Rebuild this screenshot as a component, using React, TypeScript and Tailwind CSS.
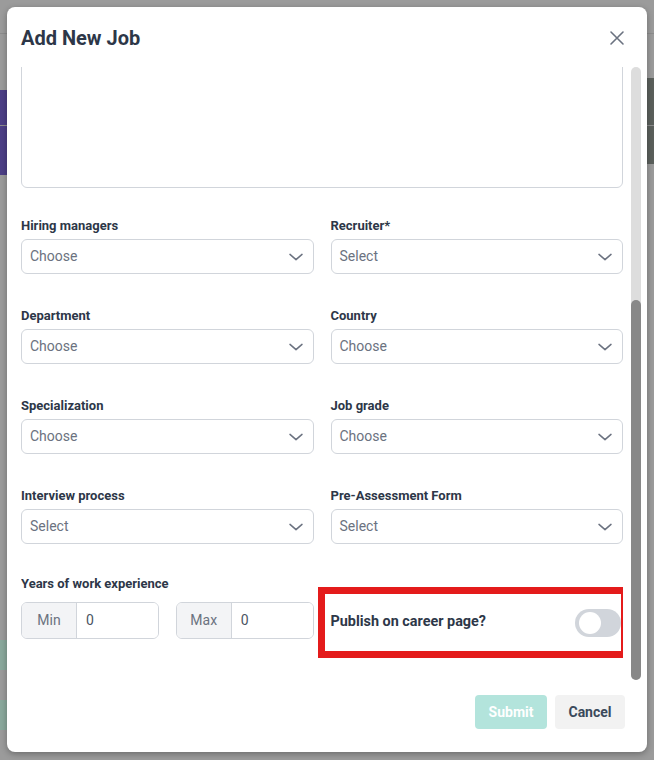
import { useEffect, useRef } from 'react'

const ROWS = [
  [
    { label: 'Hiring managers', placeholder: 'Choose' },
    { label: 'Recruiter*', placeholder: 'Select' },
  ],
  [
    { label: 'Department', placeholder: 'Choose' },
    { label: 'Country', placeholder: 'Choose' },
  ],
  [
    { label: 'Specialization', placeholder: 'Choose' },
    { label: 'Job grade', placeholder: 'Choose' },
  ],
  [
    { label: 'Interview process', placeholder: 'Select' },
    { label: 'Pre-Assessment Form', placeholder: 'Select' },
  ],
]

function Chevron() {
  return (
    <svg width="18" height="18" viewBox="0 0 24 24" fill="none" stroke="#6b7280" strokeWidth="2" strokeLinecap="round" strokeLinejoin="round">
      <path d="M4 8.5l8 7 8-7" />
    </svg>
  )
}

function SelectBox({ label, placeholder }: { label: string; placeholder: string }) {
  return (
    <div className="flex flex-col">
      <div className="text-[13px] leading-4 font-bold text-[#2d3748] mb-[5px]">{label}</div>
      <div className="h-[35px] rounded-[6px] border border-[#d1d5db] bg-white flex items-center justify-between pl-[8px] pr-[8px]">
        <span className="text-[14px] text-[#6b7280]">{placeholder}</span>
        <Chevron />
      </div>
    </div>
  )
}

function RangeInput({ addon }: { addon: string }) {
  return (
    <div className="flex h-[37px] rounded-[6px] border border-[#d1d5db] overflow-hidden">
      <div className="w-[55px] bg-[#f3f4f6] border-r border-[#d1d5db] flex items-center justify-center text-[14px] text-[#6b7280]">{addon}</div>
      <div className="flex-1 bg-white flex items-center pl-[9px] text-[14px] text-[#4b5563]">0</div>
    </div>
  )
}

export default function App() {
  const scrollRef = useRef<HTMLDivElement>(null)

  useEffect(() => {
    const el = scrollRef.current
    if (el) el.scrollTop = el.scrollHeight
  }, [])

  return (
    <div className="relative w-[654px] h-[760px] overflow-hidden bg-[#9b9b9b]" style={{ fontFamily: 'Roboto, "Liberation Sans", sans-serif' }}>
      {/* faded app behind the overlay */}
      <div className="absolute left-0 top-[33px] w-full h-px bg-[#8c8c8c]" />
      <div className="absolute left-0 top-[90px] w-[10px] h-[85px] bg-[#4c3f86]" />
      <div className="absolute right-0 top-[78px] w-[10px] h-[86px] bg-[#5b605c]" />
      <div className="absolute left-0 top-[125px] w-full h-px bg-[#8c8c8c]" />
      <div className="absolute left-0 top-[640px] w-[10px] h-[30px] bg-[#8aa89c]" />
      <div className="absolute left-0 top-[700px] w-[10px] h-[30px] bg-[#8aa89c]" />

      {/* modal */}
      <div className="absolute left-[7px] top-[7px] w-[640px] h-[745px] bg-white rounded-[8px] shadow-[0_2px_6px_rgba(0,0,0,0.3)] flex flex-col">
        <div className="flex items-center justify-between pl-[14px] pr-[22px] pt-[16px] h-[60px]">
          <h2 className="text-[20px] font-bold text-[#2d3748] leading-none -mt-[14px]">Add New Job</h2>
          <svg className="-mt-[14px]" width="16" height="16" viewBox="0 0 16 16" fill="none" stroke="#6b7280" strokeWidth="1.6" strokeLinecap="round">
            <path d="M2 2l12 12M14 2L2 14" />
          </svg>
        </div>

        <div className="flex ml-[14px] mr-[6px] h-[613px] gap-[8px]">
          <div
            ref={scrollRef}
            className="w-[602px] h-full overflow-y-scroll [scrollbar-width:none] [&::-webkit-scrollbar]:hidden"
          >
            {/* job title + description, mostly scrolled out of view */}
            <div className="flex flex-col pt-[21px]">
              <div className="h-[35px] rounded-[6px] border border-[#d1d5db]" />
              <div className="h-[310px] mt-[52px] rounded-[6px] border border-[#d1d5db]" />
            </div>

            <div className="grid grid-cols-2 gap-x-[17px] gap-y-[34px] mt-[30px]">
              {ROWS.flat().map(f => (
                <SelectBox key={f.label} label={f.label} placeholder={f.placeholder} />
              ))}
            </div>

            <div className="grid grid-cols-2 gap-x-[17px] mt-[32px] pb-[41px]">
              <div className="flex flex-col">
                <div className="text-[13px] leading-4 font-bold text-[#2d3748] mb-[10px]">Years of work experience</div>
                <div className="grid grid-cols-2 gap-x-[17px]">
                  <RangeInput addon="Min" />
                  <RangeInput addon="Max" />
                </div>
              </div>
              <div className="relative flex items-start justify-between pt-[35px] pr-[2px]">
                <span className="text-[14.4px] font-bold text-[#2d3748]">Publish on career page?</span>
                <div className="mt-[-2px] w-[46px] h-[28px] rounded-full bg-[#d1d5db] flex items-center pl-[4px]">
                  <div className="w-[22px] h-[22px] rounded-full bg-white" />
                </div>
                {/* annotation box */}
                <div className="absolute left-[-13px] right-[-5px] top-[11px] h-[71px] border-[7px] border-[#e41b1b] pointer-events-none" />
              </div>
            </div>
          </div>

          {/* scrollbar */}
          <div className="w-[10px] h-full rounded-full bg-[#dddddd] flex flex-col justify-end">
            <div className="h-[380px] rounded-full bg-[#888888]" />
          </div>
        </div>

        <div className="flex justify-end gap-[8px] pr-[22px] pt-[15px]">
          <button className="h-[34px] w-[72px] rounded-[4px] bg-[#b3e4dc] text-white text-[14px] font-bold">Submit</button>
          <button className="h-[34px] w-[70px] rounded-[4px] bg-[#f2f2f2] text-[#3b4a5c] text-[14px] font-bold">Cancel</button>
        </div>
      </div>
    </div>
  )
}
